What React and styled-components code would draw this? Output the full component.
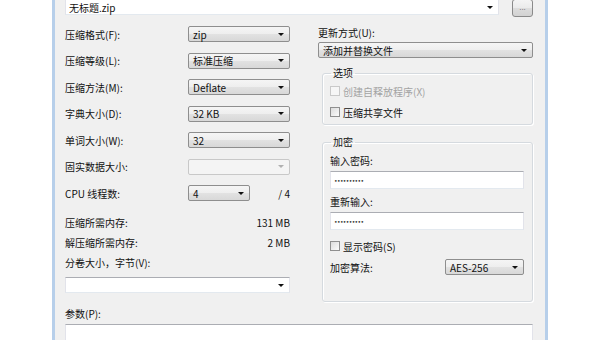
import React from 'react'
import styled, { createGlobalStyle } from 'styled-components'

const Global = createGlobalStyle`
  * { box-sizing: border-box; }
  html, body { margin: 0; padding: 0; background: #fff; overflow: hidden; }
  body {
    font-family: "Noto Sans CJK SC", "Noto Sans", sans-serif;
    font-size: 10px;
    color: #111;
  }
`

const Screen = styled.div`
  width: 600px;
  height: 340px;
  display: flex;
  overflow: hidden;
  background: #fff;
`

const Window = styled.div`
  margin-left: 52px;
  width: 496px;
  height: 100%;
  border-left: 3px solid #b7cfea;
  border-right: 3px solid #b7cfea;
  background: #f0f0f0;
  padding: 0 12px 0 10px;
`

const TopRow = styled.div`
  display: flex;
  align-items: flex-start;
  height: 17px;
  margin-top: -1px;
`

const Combo = styled.div`
  display: flex;
  align-items: center;
  width: ${p => p.$w || '100%'};
  height: ${p => p.$h || 16}px;
  padding: 0 5px 0 3px;
  background: #fff;
  border: 1px solid #abadb3;
  border-left-color: #e2e3ea;
  border-right-color: #e2e3ea;
  border-bottom-color: #e3e9ef;
  white-space: nowrap;
`

const Select = styled.div`
  display: flex;
  align-items: center;
  width: ${p => p.$w || '100%'};
  height: 16px;
  padding: 0 5px 0 4px;
  border: 1px solid ${p => (p.$disabled ? '#c8c8c8' : '#8e8e8e')};
  border-radius: 2px;
  background: ${p =>
    p.$disabled
      ? '#f4f4f4'
      : 'linear-gradient(#f5f5f5, #eeeeee 50%, #e2e2e2 51%, #d8d8d8)'};
  white-space: nowrap;
`

const Arrow = styled.span`
  margin-left: auto;
  width: 0;
  height: 0;
  border-left: 3px solid transparent;
  border-right: 3px solid transparent;
  border-top: 3px solid ${p => (p.$disabled ? '#b0b0b0' : '#111')};
`

const BrowseButton = styled.div`
  margin-left: 13px;
  width: 21px;
  height: 18px;
  border: 1px solid #8a8a8a;
  border-radius: 3px;
  background: linear-gradient(#f4f4f4, #ebebeb 50%, #dddddd 51%, #d2d2d2);
  display: flex;
  align-items: center;
  justify-content: center;
  font-size: 8px;
  line-height: 8px;
  color: #666;
  font-family: "Liberation Sans", sans-serif;
`

const Main = styled.div`
  display: grid;
  grid-template-columns: 225px 215px;
  column-gap: 28px;
  margin-top: 10px;
`

const Column = styled.div`
  display: flex;
  flex-direction: column;
`

const FieldRow = styled.div`
  display: grid;
  grid-template-columns: 1fr ${p => p.$field || 102}px;
  align-items: center;
  height: 16px;
  margin-top: ${p => p.$gap || 0}px;
`

const Label = styled.div`
  line-height: 14px;
  white-space: nowrap;
  margin-top: ${p => p.$gap || 0}px;
  color: ${p => (p.$disabled ? '#9d9d9d' : 'inherit')};
`

const CpuField = styled.div`
  display: flex;
  align-items: center;
  justify-content: space-between;
`

const InfoRow = styled.div`
  display: flex;
  justify-content: space-between;
  line-height: 14px;
  margin-top: ${p => p.$gap || 0}px;
`

const Group = styled.fieldset`
  margin: ${p => p.$top || 0}px 0 0 4px;
  padding: 0 8px ${p => p.$bottom || 0}px 7px;
  border: 1px solid #d5dadf;
  border-radius: 3px;
  box-shadow: inset 1px 1px 0 #fff, 1px 1px 0 #fff;
  min-width: 0;
`

const Legend = styled.legend`
  padding: 0 2px;
  margin-left: 1px;
  line-height: 14px;
`

const Check = styled.label`
  display: flex;
  align-items: center;
  height: 14px;
  margin-top: ${p => p.$gap || 0}px;
  color: ${p => (p.$disabled ? '#a3a3a3' : 'inherit')};
  white-space: nowrap;
`

const Box = styled.span`
  width: 10px;
  height: 10px;
  margin-right: 3px;
  border: 1px solid ${p => (p.$disabled ? '#c9c9c9' : '#8f8f8f')};
  background: ${p =>
    p.$disabled ? '#f6f6f6' : 'linear-gradient(135deg, #dcdcdc, #fbfbfb)'};
`

const Password = styled.div`
  height: 18px;
  margin-top: 3px;
  padding: 0 3px;
  display: flex;
  align-items: center;
  background: #fff;
  border: 1px solid #abadb3;
  border-left-color: #e2e3ea;
  border-right-color: #e2e3ea;
  border-bottom-color: #e3e9ef;
  font-size: 6px;
  letter-spacing: -0.6px;
  color: #333;
  font-family: "DejaVu Sans", sans-serif;
`

const Params = styled.div`
  margin-top: 5px;
`

const ParamInput = styled.div`
  margin-top: 3px;
  height: 22px;
  background: #fff;
  border: 1px solid #abadb3;
  border-left-color: #e2e3ea;
  border-right-color: #e2e3ea;
`

const leftRows = [
  { label: '压缩格式(F):', value: 'zip' },
  { label: '压缩等级(L):', value: '标准压缩' },
  { label: '压缩方法(M):', value: 'Deflate' },
  { label: '字典大小(D):', value: '32 KB' },
  { label: '单词大小(W):', value: '32' },
  { label: '固实数据大小:', value: '', disabled: true }
]

export default function App() {
  return (
    <Screen>
      <Global />
      <Window>
        <TopRow>
          <Combo $w="434px">
            无标题.zip
            <Arrow />
          </Combo>
          <BrowseButton>...</BrowseButton>
        </TopRow>

        <Main>
          <Column>
            {leftRows.map((r, i) => (
              <FieldRow key={r.label} $gap={i ? 10.5 : 0}>
                <span>{r.label}</span>
                <Select $disabled={r.disabled}>
                  {r.value}
                  <Arrow $disabled={r.disabled} />
                </Select>
              </FieldRow>
            ))}
            <FieldRow $gap={10.5}>
              <span>CPU 线程数:</span>
              <CpuField>
                <Select $w="62px">
                  4
                  <Arrow />
                </Select>
                <span>/ 4</span>
              </CpuField>
            </FieldRow>
            <InfoRow $gap={15}>
              <span>压缩所需内存:</span>
              <span>131 MB</span>
            </InfoRow>
            <InfoRow $gap={6}>
              <span>解压缩所需内存:</span>
              <span>2 MB</span>
            </InfoRow>
            <Label $gap={6}>分卷大小，字节(V):</Label>
            <Combo style={{ marginTop: 7 }}>
              <Arrow />
            </Combo>
          </Column>

          <Column>
            <Label>更新方式(U):</Label>
            <Select style={{ marginTop: 2 }}>
              添加并替换文件
              <Arrow />
            </Select>
            <Group $top={8} $bottom={5}>
              <Legend>选项</Legend>
              <Check $disabled $gap={4}>
                <Box $disabled />
                创建自释放程序(X)
              </Check>
              <Check $gap={7}>
                <Box />
                压缩共享文件
              </Check>
            </Group>
            <Group $top={10} $bottom={26}>
              <Legend>加密</Legend>
              <Label $gap={5}>输入密码:</Label>
              <Password>••••••••••</Password>
              <Label $gap={6}>重新输入:</Label>
              <Password>••••••••••</Password>
              <Check $gap={9}>
                <Box />
                显示密码(S)
              </Check>
              <FieldRow $field={79} $gap={6}>
                <span>加密算法:</span>
                <Select>
                  AES-256
                  <Arrow />
                </Select>
              </FieldRow>
            </Group>
          </Column>
        </Main>

        <Params>
          <Label>参数(P):</Label>
          <ParamInput />
        </Params>
      </Window>
    </Screen>
  )
}
